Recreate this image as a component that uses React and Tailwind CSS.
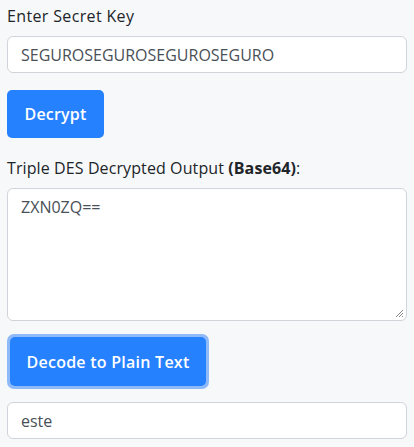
export default function App() {
  const font = { fontFamily: '"Open Sans", "Noto Sans", sans-serif' };
  return (
    <div className="min-h-[447px] w-[414px] bg-[#f7f8fa] px-[7px] pt-[4px] text-[#212529]" style={font}>
      <label className="block text-[16px] leading-[24px] tracking-[0.35px]">Enter Secret Key</label>
      <div className="mt-[8px] flex h-[37px] items-center rounded-[6px] border border-[#ced4da] bg-white px-[13px] text-[16px] text-[#495057]">
        SEGUROSEGUROSEGUROSEGURO
      </div>
      <button className="mt-[17px] flex h-[48px] w-[97px] items-center justify-center rounded-[5px] bg-[#2681ff] text-[16px] font-semibold tracking-[0.2px] text-white">
        Decrypt
      </button>
      <div className="mt-[18px] text-[16px] leading-[24px] tracking-[0.1px]">
        Triple DES Decrypted Output <span className="font-bold">(Base64)</span>:
      </div>
      <div className="relative mt-[8px] h-[133px] rounded-[6px] border border-[#ced4da] bg-white px-[13px] pt-[6px] text-[16px] text-[#495057]">
        ZXN0ZQ==
        <svg className="absolute bottom-[2px] right-[2px]" width="9" height="9" viewBox="0 0 9 9">
          <path d="M8 1 L1 8 M8 4 L4 8 M8 7 L7 8" stroke="#888" strokeWidth="1" />
        </svg>
      </div>
      <div className="mt-[13px] inline-block rounded-[7px] bg-[#8fbaf9] p-[3px]">
        <button className="flex h-[49px] w-[196px] items-center justify-center rounded-[5px] bg-[#2681ff] text-[16px] font-semibold tracking-[0.25px] text-white">
          Decode to Plain Text
        </button>
      </div>
      <div className="mt-[13px] flex h-[37px] items-center rounded-[6px] border border-[#ced4da] bg-white px-[13px] text-[16px] text-[#495057]">
        este
      </div>
    </div>
  );
}
